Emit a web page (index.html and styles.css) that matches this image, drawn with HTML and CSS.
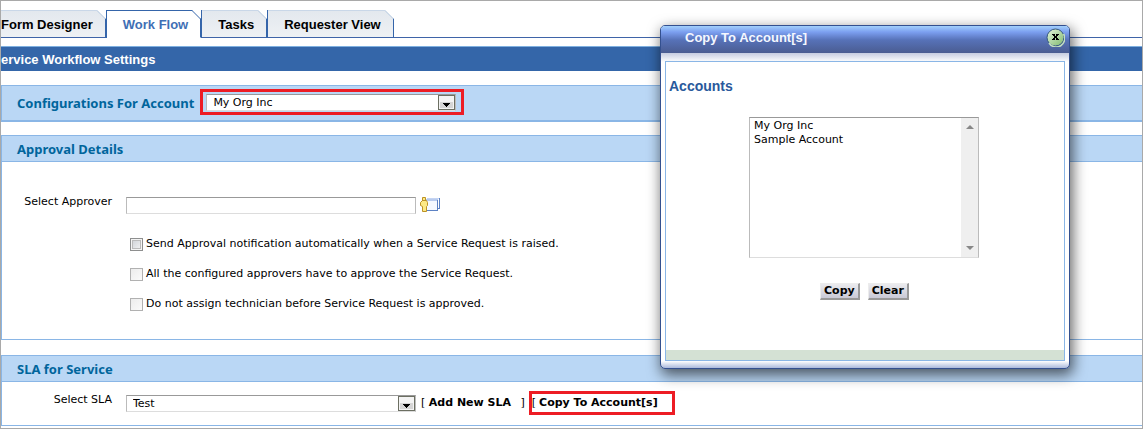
FILE: index.html
```html
<!DOCTYPE html>
<html lang="en">
<head>
<meta charset="utf-8">
<title>Service Workflow Settings</title>
<link rel="stylesheet" href="styles.css">
</head>
<body>
<div class="page">
  <nav class="tabs">
    <a class="tab tab-first" href="#">Form Designer<svg class="corner" viewBox="0 0 9 9"><path class="cut" d="M0 0H9V9Z"/><path class="edge" d="M0 .5 8.5 9"/></svg></a>
    <a class="tab tab-active" href="#" aria-current="page">Work Flow<svg class="corner" viewBox="0 0 9 9"><path class="cut" d="M0 0H9V9Z"/><path class="edge" d="M0 .5 8.5 9"/></svg></a>
    <a class="tab" href="#">Tasks<svg class="corner" viewBox="0 0 9 9"><path class="cut" d="M0 0H9V9Z"/><path class="edge" d="M0 .5 8.5 9"/></svg></a>
    <a class="tab" href="#">Requester View<svg class="corner" viewBox="0 0 9 9"><path class="cut" d="M0 0H9V9Z"/><path class="edge" d="M0 .5 8.5 9"/></svg></a>
  </nav>
  <h1 class="title-bar">ervice Workflow Settings</h1>

  <div class="account-bar">
    <label class="heading" for="account">Configurations For Account</label>
    <span class="mark mark-account">
      <span class="drop">
        <select id="account"><option>My Org Inc</option></select>
        <svg class="arrow" viewBox="0 0 17 15"><rect class="arrow-frame" x=".5" y=".5" width="16" height="14"/><path class="arrow-shade" d="M2 7H15V13H2Z"/><path d="M5 8H12V9H11V10H10V11H9V12H8V11H7V10H6V9H5Z"/></svg>
      </span>
    </span>
  </div>

  <section class="panel">
    <h2 class="panel-head heading">Approval Details</h2>
    <div class="panel-body approval">
      <div class="row">
        <label class="row-label" for="approver">Select Approver</label>
        <input class="field" id="approver" type="text">
        <button class="picker" type="button" aria-label="Choose approver">
          <svg width="20" height="16" viewBox="0 0 20 16"><path fill="#c4d4f3" d="M7 1H20V2H7Z"/><path fill="#5c82c4" d="M19 1H20V12H18V11H19Z"/><path fill="#f5f9ff" d="M6 3H17V14H6Z"/><path fill="#b8cbee" d="M6 2H18V4H6Z"/><path fill="#5c82c4" d="M17 3H18V14H7V13H17Z"/><path fill="#fde985" stroke="#bc9225" d="M2.5 .5H5.5V3.5H6.5L7.5 5.5V8.5L6.5 9.5V14.5H2.500V9.500L.5 8.500V5.500L2.500 3.500Z"/><path fill="#bc9225" d="M2 3H6V4H2Z"/></svg>
        </button>
      </div>
      <div class="checks">
        <label class="check"><input class="box box-hot" type="checkbox">Send Approval notification automatically when a Service Request is raised.</label>
        <label class="check"><input class="box" type="checkbox">All the configured approvers have to approve the Service Request.</label>
        <label class="check"><input class="box" type="checkbox">Do not assign technician before Service Request is approved.</label>
      </div>
    </div>
  </section>

  <section class="panel">
    <h2 class="panel-head heading">SLA for Service</h2>
    <div class="panel-body sla">
      <div class="row">
        <label class="row-label" for="sla">Select SLA</label>
        <span class="drop drop-sla">
          <select id="sla"><option>Test</option></select>
          <svg class="arrow" viewBox="0 0 17 15"><rect class="arrow-frame" x=".5" y=".5" width="16" height="14"/><path class="arrow-shade" d="M2 7H15V13H2Z"/><path d="M5 8H12V9H11V10H10V11H9V12H8V11H7V10H6V9H5Z"/></svg>
        </span>
        <span class="add-link">[ <a href="#">Add New SLA</a> <span class="close-bracket">]</span></span>
        <span class="mark mark-copy">[<a href="#">Copy To Account[s]</a></span>
      </div>
    </div>
  </section>
</div>

<div class="dialog" role="dialog" aria-labelledby="dialog-title">
  <header class="dialog-head">
    <h2 class="dialog-title" id="dialog-title">Copy To Account[s]</h2>
    <button class="close" type="button" aria-label="Close">
      <svg width="19" height="19" viewBox="0 0 19 19"><defs><linearGradient id="g" x2="1" y2="1"><stop stop-color="#e4f5dc"/><stop offset="1" stop-color="#7fb86e"/></linearGradient></defs><circle cx="9.500" cy="9.500" r="8.500" fill="url(#g)" stroke="#35577f"/><path d="M3 15A8.500 8.500 0 0 0 17.500 6" fill="none" stroke="#c3dfc0" stroke-width="1.500"/><path d="M6 6H9V8H10V6H13V7H12V8H11V10H12V11H13V12H10V10H9V12H6V11H7V10H8V8H7V7H6Z"/></svg>
    </button>
  </header>
  <div class="dialog-body">
    <h3 class="dialog-heading"><label for="accounts">Accounts</label></h3>
    <div class="list">
      <select id="accounts" size="8" multiple><option>My Org Inc</option><option>Sample Account</option></select>
      <span class="scroll" aria-hidden="true">
        <svg width="8" height="4" viewBox="0 0 8 4"><path d="M0 4 4 0 8 4Z"/></svg>
        <svg width="8" height="4" viewBox="0 0 8 4"><path d="M0 0H8L4 4Z"/></svg>
      </span>
    </div>
    <div class="actions">
      <button class="btn" type="button">Copy</button>
      <button class="btn" type="button">Clear</button>
    </div>
    <div class="dialog-foot"></div>
  </div>
</div>
</body>
</html>
```
FILE: styles.css
```css
* { box-sizing: border-box; }
body {
  margin: 0;
  font: 11px/14px Verdana, "DejaVu Sans", sans-serif;
  color: #000;
  background: #fff;
}
h1, h2, h3 { margin: 0; }
a { color: inherit; text-decoration: none; font-weight: bold; }
button, input, select { font: inherit; color: inherit; margin: 0; }

.page {
  border: 1px solid #a9a9a9;
  padding: 9px 0 2px;
  overflow: hidden;
}

.tabs {
  display: flex;
  height: 28px;
  border-bottom: 1px solid #3f64a8;
}
.tab {
  position: relative;
  height: 28px;
  padding: 0 12px 0 16px;
  border-top: 1px solid #c9d7e8;
  border-right: 1px solid #3565aa;
  border-bottom: 1px solid #3f64a8;
  margin-right: 1px;
  background: linear-gradient(#e3e8ee, #eef1f4);
  box-shadow: -1px 0 #3565aa;
  font: bold 13px/27px Arial, "Liberation Sans", sans-serif;
}
.tab-first { padding-left: 0; box-shadow: none; }
.tab-active {
  color: #3f6fb5;
  background: #fff;
  border-top-color: #3565aa;
  border-bottom-color: #fff;
}
.corner {
  position: absolute;
  top: -1px;
  right: -1px;
  width: 9px;
  height: 9px;
}
.cut { fill: #fff; }
.edge { fill: none; stroke: #b3c8e0; }
.tab-active .edge { stroke: #3565aa; }

.title-bar {
  margin-top: 8px;
  height: 25px;
  border-top: 1px solid #7fb0e0;
  background: #3466a9;
  color: #fff;
  font: bold 13px/25px Arial, "Liberation Sans", sans-serif;
}

.heading {
  color: #00659c;
  font: bold 13px/16px Tahoma, "Noto Sans", sans-serif;
}
.account-bar {
  display: flex;
  align-items: center;
  gap: 6px;
  height: 37px;
  margin-top: 14px;
  padding-left: 15px;
  border: 1px solid #8ab6e6;
  border-bottom-width: 2px;
  border-right: 0;
  background: #bad7f5;
}
.mark { border: 3px solid #ed1c24; }
.mark-account { padding: 2px 5px 1px 3px; margin-bottom: 2px; }
.drop {
  position: relative;
  display: block;
  width: 250px;
}
.drop select {
  appearance: none;
  display: block;
  width: 100%;
  height: 17px;
  padding: 1px 20px 0 6px;
  border: 1px solid;
  border-color: #999 #bbb #ddd #bbb;
  border-radius: 0;
  background: #fff;
}
.arrow {
  position: absolute;
  top: 1px;
  right: 1px;
  width: 17px;
  height: 15px;
  pointer-events: none;
}
.arrow-frame { fill: #f3f3f3; stroke: #6c6f62; }
.arrow-shade { fill: #d5d5d5; }

.panel {
  margin-top: 13px;
  border: 1px solid #8ab6e6;
  border-right: 0;
}
.panel + .panel { margin-top: 15px; }
.panel-head {
  padding: 5px 15px 4px;
  border-bottom: 1px solid #8ab6e6;
  background: #bad7f5;
}
.approval { padding: 33px 0 28px; }
.sla { padding: 9px 0 10px; }
.row { display: flex; align-items: center; }
.row-label {
  width: 110px;
  margin-right: 14px;
  margin-bottom: 6px;
  text-align: right;
}
.field {
  width: 290px;
  height: 17px;
  padding: 0 4px;
  border: 1px solid;
  border-color: #999 #bbb #ddd #bbb;
}
.picker {
  display: flex;
  margin-left: 4px;
  padding: 0;
  border: 0;
  background: none;
}
.checks {
  display: flex;
  flex-direction: column;
  gap: 16px;
  padding: 22px 0 0 128px;
}
.check { display: flex; align-items: center; gap: 3px; }
.box {
  appearance: none;
  width: 13px;
  height: 13px;
  margin: 0;
  border: 1px solid #b1b1b1;
  background: linear-gradient(135deg, #ececec, #fafafa);
}
.box-hot {
  border-color: #8e8f8f;
  box-shadow: inset 0 0 0 1px #f4f4f4, inset 0 0 0 2px #bbb;
  background: linear-gradient(135deg, #cbcfd5, #f6f6f6);
}
.drop-sla { width: 290px; }
.add-link { margin-left: 5px; white-space: nowrap; }
.close-bracket { margin-left: 6px; }
.mark-copy {
  display: flex;
  gap: 3px;
  margin-left: 4px;
  padding: 2px 14px 2px 0;
}

.dialog {
  position: absolute;
  top: 25px;
  right: 73px;
  width: 410px;
  border: 1px solid #34508f;
  border-radius: 5px;
  padding: 0 4px 7px;
  background: linear-gradient(#c6cce0, #fff 9px) 0 27px / 100% 10px no-repeat,
    linear-gradient(#fff, #aab9dc) 0 100% / 100% 7px no-repeat, #fff;
  box-shadow: 2px 5px 14px 1px rgba(0, 0, 0, .6);
}
.dialog-head {
  display: flex;
  align-items: flex-start;
  justify-content: space-between;
  height: 27px;
  margin: 0 -4px 8px;
  padding: 2px 4px 0 24px;
  border-radius: 4px 4px 0 0;
  background: linear-gradient(#a2d0fc, #7c9ff0 6px, #5772b8 14px, #4a5c91);
}
.dialog-title {
  color: #f5f8ff;
  font: bold 13px/20px Arial, "Liberation Sans", sans-serif;
}
.close { display: flex; padding: 0; border: 0; background: none; }
.dialog-body { border: 1px solid #8ab6e6; }
.dialog-heading {
  padding: 14px 3px 0;
  color: #29599c;
  font: bold 14px/20px Arial, "Liberation Sans", sans-serif;
}
.list {
  display: flex;
  width: 230px;
  height: 141px;
  margin: 21px auto 0 83px;
  border: 1px solid;
  border-color: #999 #bbb #ddd #bbb;
}
.list select {
  flex: 1;
  height: 100%;
  padding: 1px 0 0;
  border: 0;
  border-radius: 0;
  background: #fff;
  overflow: hidden;
}
.list option { min-height: 14px; padding: 0 4px; line-height: 14px; }
.scroll {
  display: flex;
  flex-direction: column;
  align-items: center;
  justify-content: space-between;
  width: 17px;
  padding: 7px 0;
  background: #efefef;
}
.scroll path { fill: #888; }
.actions {
  display: flex;
  gap: 8px;
  padding: 25px 0 0 154px;
}
.btn {
  height: 17px;
  padding: 0 3px;
  border: 1px solid;
  border-width: 1px 2px 2px 1px;
  border-color: #ececec #999 #999 #ececec;
  background: linear-gradient(#ebebee, #c9c9d6);
  font-weight: bold;
  line-height: 14px;
}
.dialog-foot { height: 10px; margin-top: 50px; background: #d4e1d4; }
```
